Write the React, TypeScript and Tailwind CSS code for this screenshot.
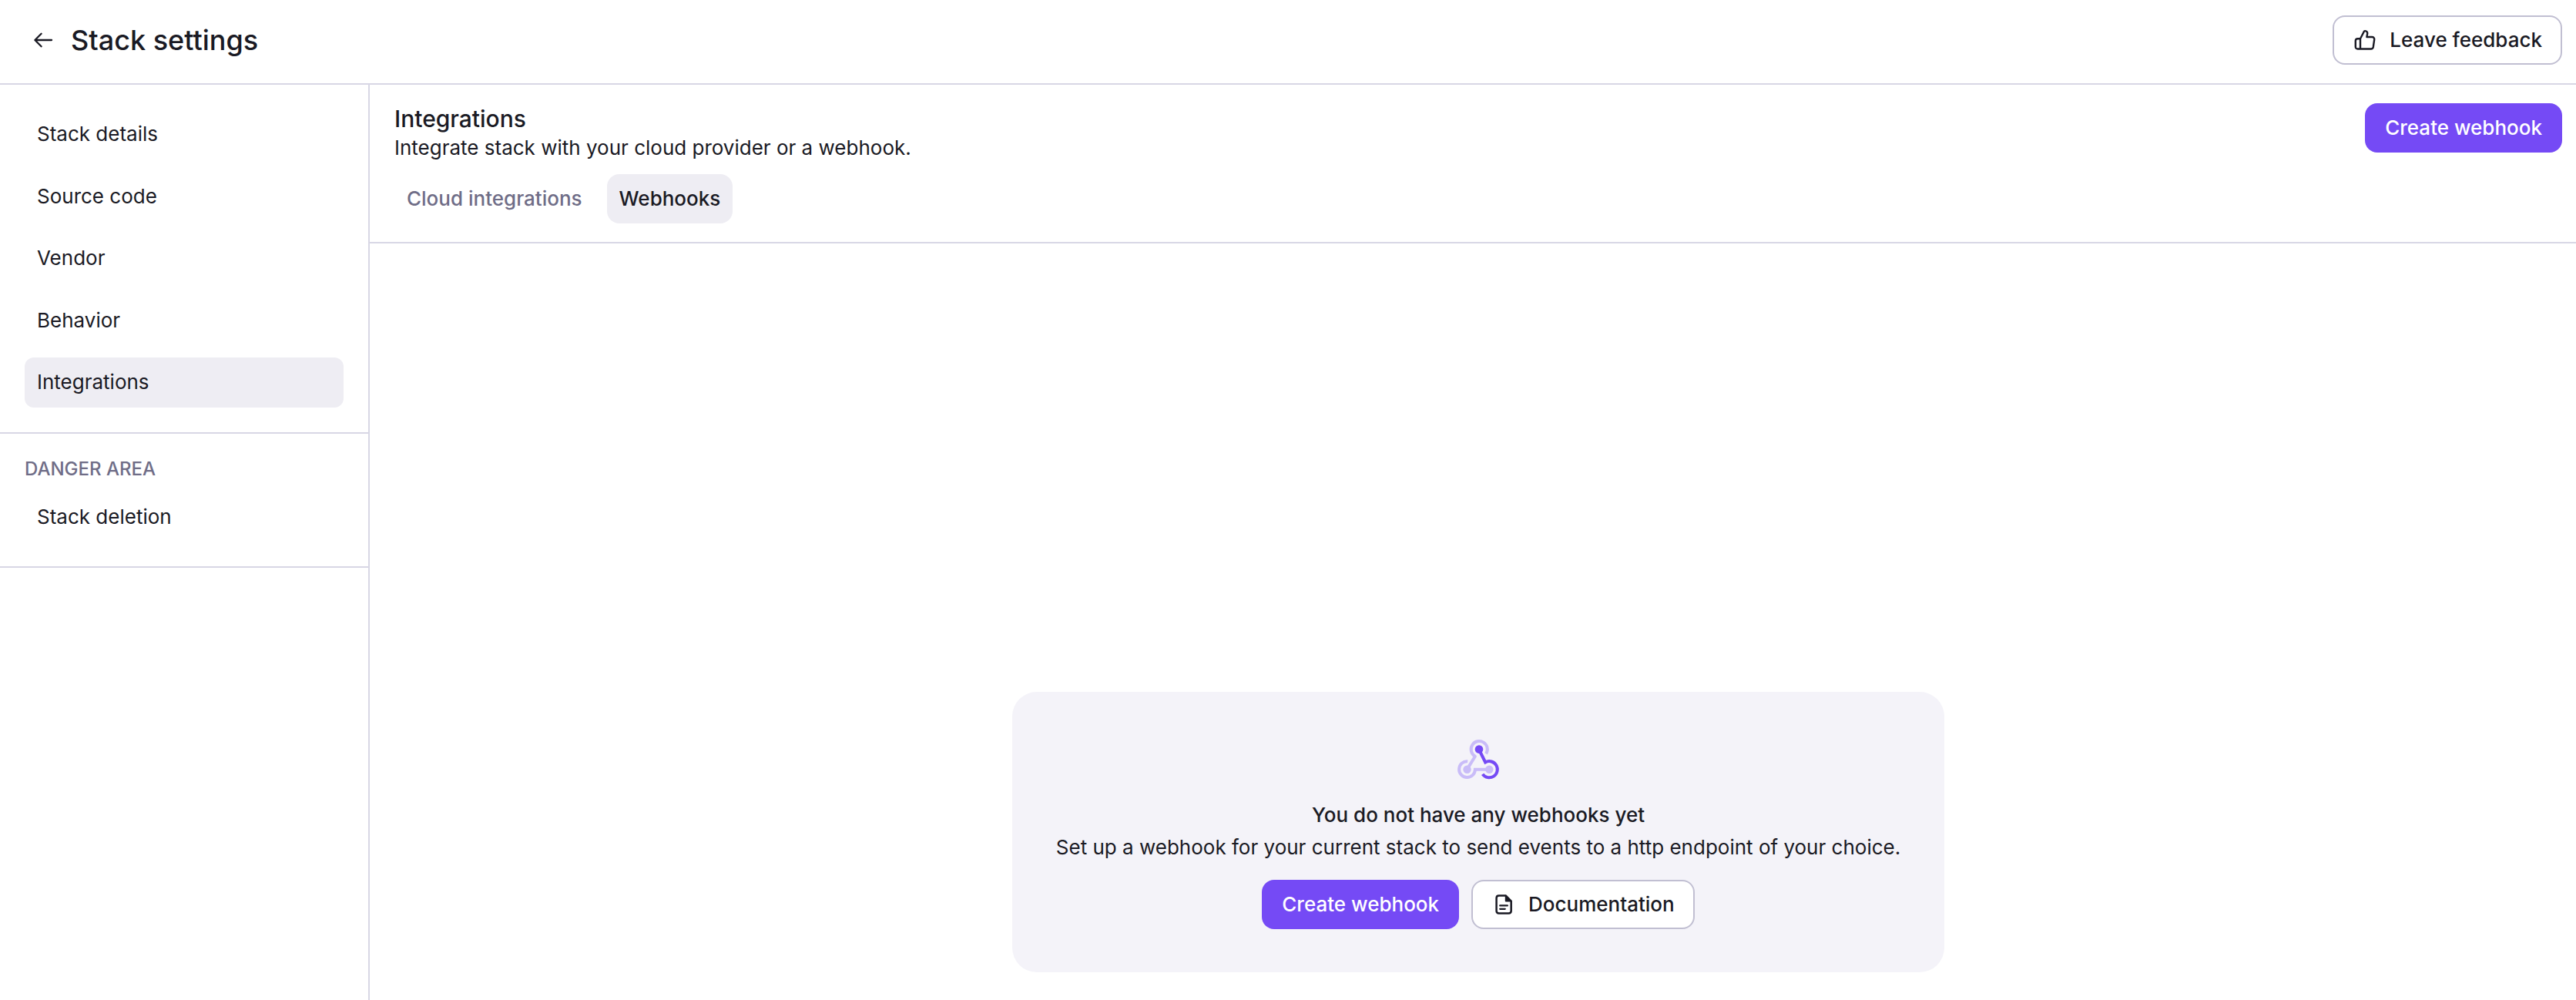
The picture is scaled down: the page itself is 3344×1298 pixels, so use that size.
import type { ReactNode } from 'react';

const navItems = ['Stack details', 'Source code', 'Vendor', 'Behavior', 'Integrations'];

function ThumbIcon() {
  return (
    <svg width="32" height="32" viewBox="0 0 32 32" fill="none" stroke="currentColor" strokeWidth="2.4" strokeLinejoin="round" strokeLinecap="round">
      <path d="M10 27.5V14.2L14.9 4.8C16 3.4 19.6 4.4 19.2 7.6L18.4 12H25.2C27.2 12 28.5 13.5 28.2 15.4L26.8 25C26.5 26.6 25.4 27.5 23.9 27.5H6.6C4.8 27.5 3.8 26.4 3.8 24.7V17C3.8 15.3 4.8 14.2 6.6 14.2H10" />
    </svg>
  );
}

function DocIcon() {
  return (
    <svg width="32" height="32" viewBox="0 0 32 32" fill="none" stroke="currentColor" strokeWidth="2.5" strokeLinejoin="round" strokeLinecap="round">
      <path d="M18.6 4.5H9.8C7.9 4.5 6.6 5.8 6.6 7.7V24.3C6.6 26.2 7.9 27.5 9.8 27.5H22.5C24.4 27.5 25.7 26.2 25.7 24.3V11.6Z" />
      <path d="M18.6 4.5V11.6H25.7Z" fill="currentColor" strokeWidth="1.6" />
      <path d="M11.2 17.4H20.9M11.2 21.8H17.8" strokeWidth="2.2" />
    </svg>
  );
}

function WebhookIcon() {
  return (
    <svg width="64" height="64" viewBox="0 0 64 64" fill="none" strokeWidth="4">
      <g stroke="#c9bcf8">
        <path d="M42.1 24.4A10.6 10.6 0 1 0 27.9 27.8L17.6 44.4" strokeLinejoin="round" />
        <path d="M18.2 34.2A10.4 10.4 0 1 0 27.9 44.7H46" />
      </g>
      <circle cx="17.5" cy="44.7" r="5.2" fill="#c9bcf8" />
      <circle cx="46.3" cy="44.7" r="5.2" fill="#c9bcf8" />
      <path d="M33 19L41.2 35.4A10.6 10.6 0 1 1 37.6 50.9" stroke="#754af5" />
      <circle cx="33" cy="18.6" r="5.3" fill="#754af5" />
    </svg>
  );
}

function Button({ primary, icon, children }: { primary?: boolean; icon?: ReactNode; children: ReactNode }) {
  return (
    <button
      className={
        primary
          ? 'flex h-16 items-center justify-center rounded-2xl bg-[#754af5] px-[26px] text-[26px] font-medium text-white'
          : 'flex h-16 items-center justify-center gap-4 rounded-2xl border-2 border-[#c1bfd2] bg-white px-6 text-[26px] font-medium'
      }
    >
      {icon}
      <span className="whitespace-nowrap pb-px">{children}</span>
    </button>
  );
}

export default function App() {
  return (
    <div className="flex h-[1298px] w-full flex-col overflow-hidden bg-white font-['Inter',sans-serif] text-[26px] text-[#1a1a24]">
      <header className="flex h-[110px] shrink-0 items-center justify-between border-b-2 border-[#d8d7e5] pb-1 pl-10 pr-[18px]">
        <div className="flex items-center gap-5">
          <svg width="32" height="32" viewBox="0 0 32 32" fill="none" stroke="currentColor" strokeWidth="2.3" strokeLinecap="round" strokeLinejoin="round">
            <path d="M27 16H5.6M13.6 7.8L5.4 16L13.6 24.2" />
          </svg>
          <h1 className="text-[36px] font-medium leading-[44px]">Stack settings</h1>
        </div>
        <Button icon={<ThumbIcon />}>Leave feedback</Button>
      </header>
      <div className="flex min-h-0 flex-1">
        <aside className="w-[480px] shrink-0 border-r-2 border-[#d8d7e5]">
          <nav className="flex flex-col gap-4 border-b-2 border-[#d8d7e5] p-8">
            {navItems.map((item) => (
              <a
                key={item}
                className={
                  item === 'Integrations'
                    ? 'flex h-[64.6px] items-center rounded-xl bg-[#eeedf3] px-4 pb-[1.6px]'
                    : 'flex h-[64.6px] items-center rounded-xl px-4 pb-[1.6px]'
                }
              >
                {item}
              </a>
            ))}
          </nav>
          <nav className="flex flex-col border-b-2 border-[#d8d7e5] p-8">
            <h2 className="h-11 text-2xl font-medium leading-[28px] text-[#6f6d87]">DANGER AREA</h2>
            <a className="flex h-16 items-center px-4 pb-px">Stack deletion</a>
          </nav>
        </aside>
        <main className="flex min-w-0 flex-1 flex-col">
          <div className="flex h-[206px] shrink-0 items-start justify-between border-b-2 border-[#d8d7e5] py-6 pl-8 pr-[18px]">
            <div className="flex flex-col">
              <h2 className="text-[30px] font-medium leading-10">Integrations</h2>
              <p className="leading-9">Integrate stack with your cloud provider or a webhook.</p>
              <div className="mt-4 flex gap-4 font-medium">
                <a className="flex h-16 items-center rounded-2xl px-4 pb-px text-[#6f6d87]">Cloud integrations</a>
                <a className="flex h-16 items-center rounded-2xl bg-[#eeedf3] px-4 pb-px">Webhooks</a>
              </div>
            </div>
            <Button primary>Create webhook</Button>
          </div>
          <div className="flex flex-1 flex-col items-center justify-end pb-9 pl-8 pr-[18px]">
            <section className="flex h-[364px] w-[1210px] flex-col items-center rounded-[32px] bg-[#f4f3f9] pt-14">
              <WebhookIcon />
              <h3 className="mt-[22px] font-medium leading-9">You do not have any webhooks yet</h3>
              <p className="mt-1.5 whitespace-nowrap leading-9">
                Set up a webhook for your current stack to send events to a http endpoint of your choice.
              </p>
              <div className="mt-6 flex gap-4">
                <Button primary>Create webhook</Button>
                <Button icon={<DocIcon />}>Documentation</Button>
              </div>
            </section>
          </div>
        </main>
      </div>
    </div>
  );
}
